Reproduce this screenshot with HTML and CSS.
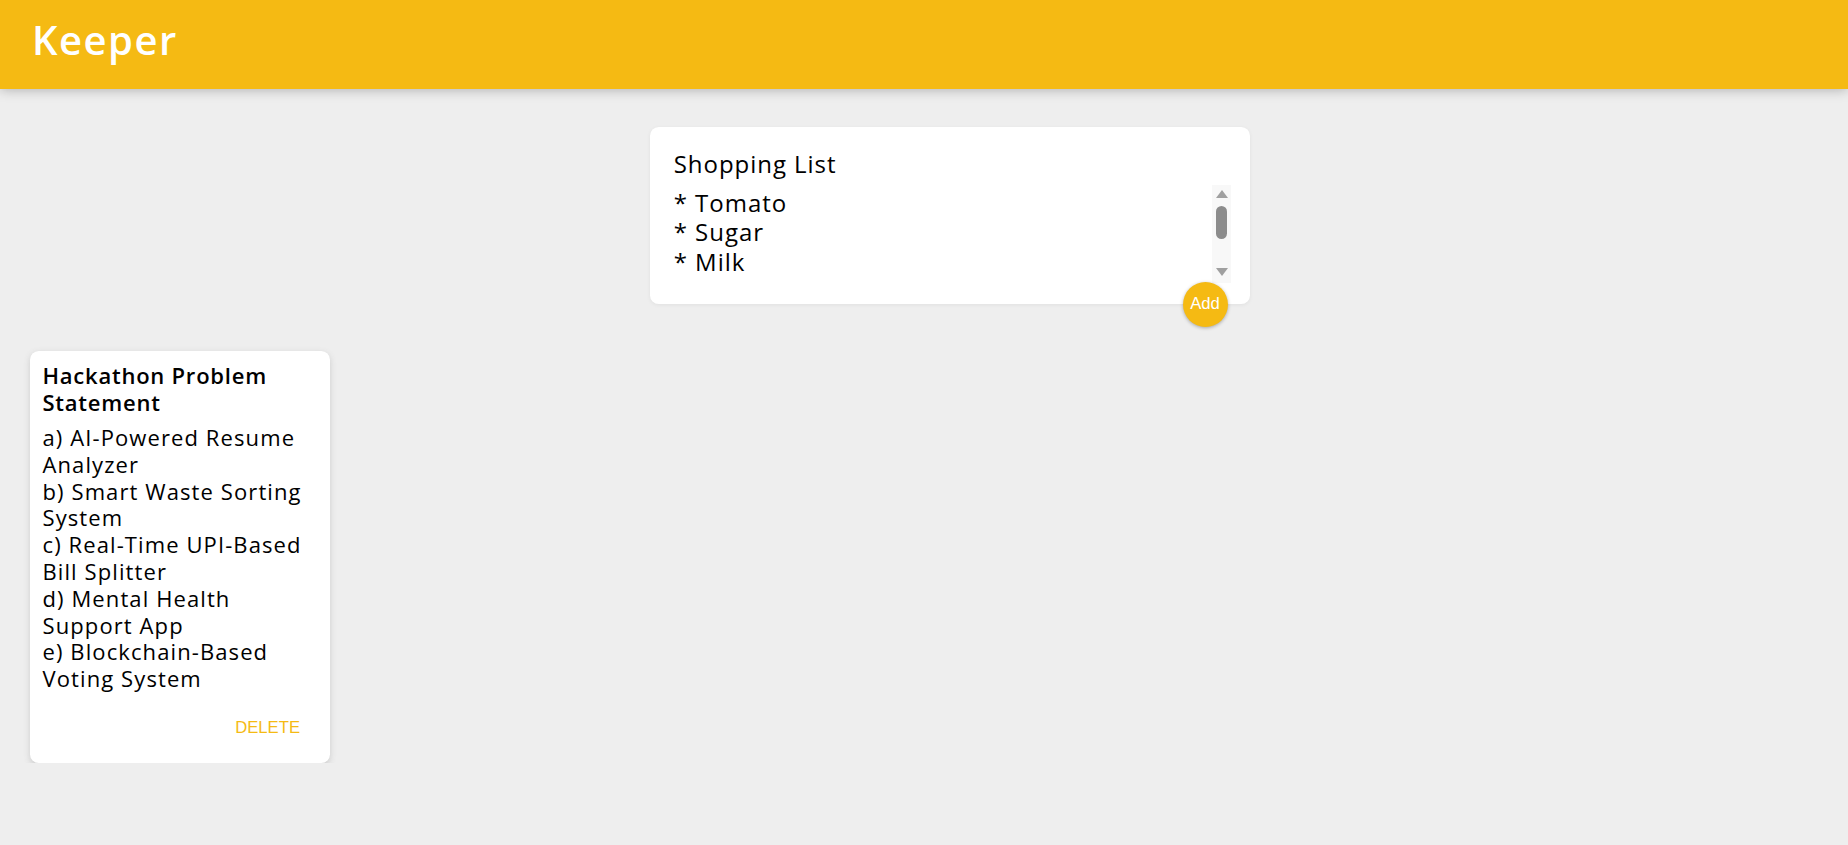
FILE: index.html
```html
<!DOCTYPE html>
<html lang="en">
<head>
<meta charset="utf-8">
<title>Keeper</title>
<link rel="stylesheet" href="styles.css">
</head>
<body>
<header class="header">
  <h1 class="logo">Keeper</h1>
</header>
<main>
  <form class="create-note">
    <input class="create-title" name="title" value="Shopping List">
    <div class="create-body">
      <textarea class="create-text" name="content" rows="3">* Tomato
* Sugar
* Milk</textarea>
      <div class="scrollbar">
        <span class="sb-up"></span>
        <span class="sb-thumb"></span>
        <span class="sb-down"></span>
      </div>
    </div>
    <button class="add-btn" type="button">Add</button>
  </form>
  <div class="notes">
    <div class="note">
      <h1 class="note-title">Hackathon Problem Statement</h1>
      <p class="note-text">a) AI-Powered Resume Analyzer
b) Smart Waste Sorting System
c) Real-Time UPI-Based Bill Splitter
d) Mental Health Support App
e) Blockchain-Based Voting System</p>
      <div class="note-actions">
        <button class="delete-btn" type="button">DELETE</button>
      </div>
    </div>
  </div>
</main>
</body>
</html>
```

FILE: styles.css
```css
* {
  margin: 0;
  padding: 0;
  box-sizing: border-box;
}

html, body {
  background: #eeeeee;
  font-family: "Open Sans", "Noto Sans", sans-serif;
  color: #000;
}

.header {
  position: relative;
  z-index: 1;
  height: 89px;
  padding: 19.5px 32px 0;
  background: #f5ba13;
  box-shadow: 0 0 12px rgba(0, 0, 0, 0.3);
}

.logo {
  color: #fff;
  font-size: 40px;
  line-height: 40px;
  font-weight: 600;
  letter-spacing: 1.5px;
}

.create-note {
  position: relative;
  width: 600px;
  margin: 38px 0 27px 650px;
  padding: 18.75px 18.75px 21px;
  background: #fff;
  border-radius: 8.75px;
  box-shadow: 0 1px 4px rgba(0, 0, 0, 0.06);
}

.create-title,
.create-text {
  border: none;
  outline: none;
  background: transparent;
  font-family: "Open Sans", "Noto Sans", sans-serif;
  font-size: 24px;
  line-height: 29.26px;
  font-weight: 400;
  letter-spacing: 0.04em;
  color: #000;
}

.create-title {
  display: block;
  width: 100%;
  height: 39.26px;
  padding: 3px 5px 7px;
}

.create-body {
  display: flex;
  height: 98px;
}

.create-text {
  flex: 1;
  resize: none;
  overflow: hidden;
  padding: 3px 5px 5px;
}

.scrollbar {
  width: 19px;
  display: flex;
  flex-direction: column;
  align-items: center;
  padding: 5px 0 7px;
  background: #f8f8f8;
}

.sb-up,
.sb-down {
  width: 0;
  height: 0;
  border-left: 6.5px solid transparent;
  border-right: 6.5px solid transparent;
}

.sb-up {
  border-bottom: 8px solid #a0a0a0;
}

.sb-down {
  margin-top: auto;
  border-top: 8px solid #a0a0a0;
}

.sb-thumb {
  width: 11px;
  height: 33px;
  margin-top: 8px;
  border-radius: 6px;
  background: #8c8c8c;
}

.add-btn {
  position: absolute;
  right: 22.5px;
  bottom: -22.5px;
  width: 45px;
  height: 45px;
  border: none;
  border-radius: 50%;
  background: #f5ba13;
  color: #fff;
  font-family: "Liberation Sans", Arial, sans-serif;
  font-size: 16.67px;
  box-shadow: 0 1px 3.75px rgba(0, 0, 0, 0.3);
}

.notes {
  display: flex;
  align-items: flex-start;
  padding-left: 30px;
}

.note {
  width: 300px;
  margin-top: 20px;
  padding: 11px 12.5px 12.5px;
  background: #fff;
  border-radius: 8.75px;
  box-shadow: 0 2.5px 6px #cccccc;
}

.note-title {
  font-size: 22px;
  line-height: 26.8px;
  font-weight: 600;
  letter-spacing: 0.035em;
  margin-bottom: 8.5px;
}

.note-text {
  font-size: 22px;
  line-height: 26.8px;
  font-weight: 400;
  letter-spacing: 0.05em;
  white-space: pre-wrap;
  padding-right: 8px;
  margin-bottom: 13px;
}

.note-actions {
  display: flex;
  justify-content: flex-end;
}

.delete-btn {
  height: 45px;
  padding: 0;
  margin-right: 17.5px;
  border: none;
  background: none;
  color: #f5ba13;
  font-family: "Liberation Sans", Arial, sans-serif;
  font-size: 16.67px;
}
```
